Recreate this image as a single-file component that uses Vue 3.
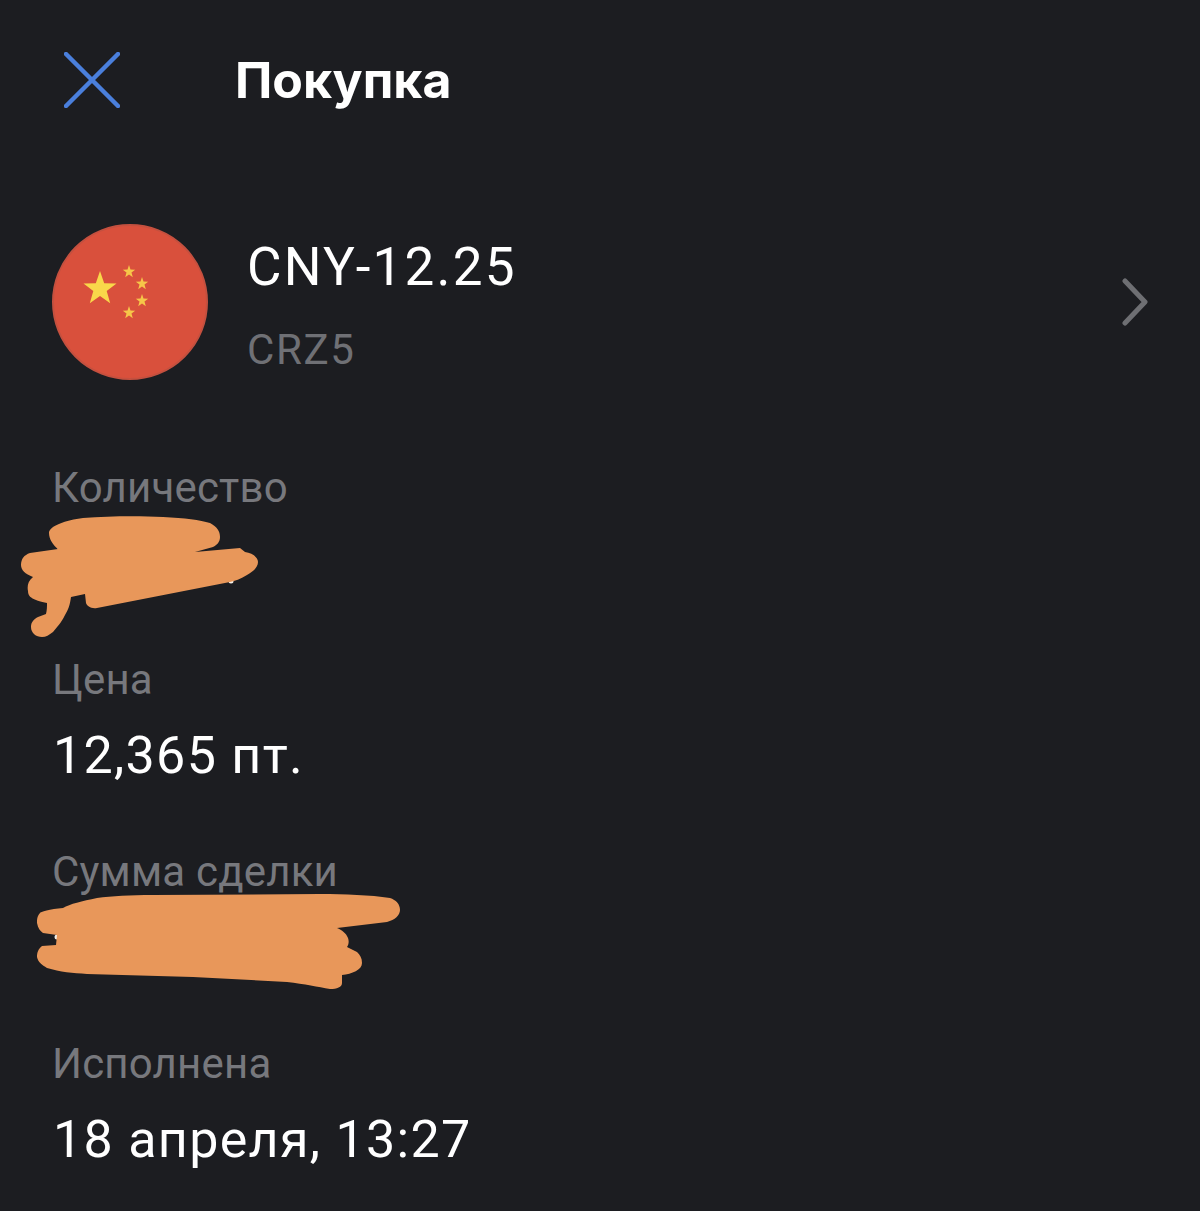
<script setup>
const details = [
  { label: 'Количество', value: '' },
  { label: 'Цена', value: '12,365 пт.' },
  { label: 'Сумма сделки', value: '' },
  { label: 'Исполнена', value: '18 апреля, 13:27' },
]
</script>

<template>
  <div class="page">
    <header class="top">
      <svg class="close" width="56" height="56" viewBox="0 0 56 56">
        <path d="M2 2L54 54M54 2L2 54" fill="none" stroke="#4a7fdc" stroke-width="4.5" stroke-linecap="round" />
      </svg>
      <h1 class="title">Покупка</h1>
    </header>

    <div class="asset">
      <svg class="flag" width="156" height="156" viewBox="0 0 156 156">
        <circle cx="78" cy="78" r="77" fill="#d9503c" stroke="#c4503f" stroke-width="2" />
        <!-- big star and four small ones -->
        <polygon fill="#f9d84a" points="48,47 52.2,59.2 64.5,59.4 54.7,66.9 58.2,79.2 48,71.9 37.8,79.2 41.3,66.9 31.5,59.4 43.8,59.2" />
        <polygon fill="#f6c649" points="77,41 78.5,45.6 83.2,45.7 79.5,48.6 80.8,53.2 77,50.5 73.2,53.2 74.5,48.6 70.8,45.7 75.5,45.6" />
        <polygon fill="#f6c649" points="90,53 91.5,57.6 96.2,57.7 92.5,60.6 93.8,65.2 90,62.5 86.2,65.2 87.5,60.6 83.8,57.7 88.5,57.6" />
        <polygon fill="#f6c649" points="90,70 91.5,74.6 96.2,74.7 92.5,77.6 93.8,82.2 90,79.5 86.2,82.2 87.5,77.6 83.8,74.7 88.5,74.6" />
        <polygon fill="#f6c649" points="77,82 78.5,86.6 83.2,86.7 79.5,89.6 80.8,94.2 77,91.5 73.2,94.2 74.5,89.6 70.8,86.7 75.5,86.6" />
      </svg>
      <div class="asset-text">
        <div class="asset-name">CNY-12.25</div>
        <div class="asset-code">CRZ5</div>
      </div>
      <svg class="chevron" width="28" height="48" viewBox="0 0 28 48">
        <path d="M5 3L25 24L5 45" fill="none" stroke="#6e6f73" stroke-width="5" stroke-linecap="round" stroke-linejoin="round" />
      </svg>
    </div>

    <div class="details">
      <div v-for="item in details" :key="item.label" class="detail">
        <div class="label">{{ item.label }}</div>
        <div class="value">{{ item.value }}</div>
      </div>
    </div>

    <!-- the scribbles that hide the amounts lie over everything -->
    <svg class="scribble" width="1200" height="1211" viewBox="0 0 1200 1211">
      <g fill="#f4efe8">
        <circle cx="60" cy="548" r="2.5" />
        <circle cx="231" cy="581" r="2.5" />
        <circle cx="57" cy="937" r="2.5" />
      </g>
      <path fill="#e8975a" d="M49 533C49 526 66 520 83 518C110 516 140 516 163 517C185 518 200 520 210 523C217 527 220 531 220 537C220 542 217 545 213 547L195 552L240 548L245 552C252 553 258 557 258 562C258 568 252 572 247 575C240 579 235 581 230 582L97 608C91 609 87 606 86 603L85 594L71 597C70 605 68 610 65 615C62 622 56 628 53 632C49 635 46 637 42 637C36 637 31 633 31 627C31 622 34 619 38 617L46 614C47 610 47 606 47 603C42 602 38 601 36 600C31 598 28 596 28 591C27 586 28 581 33 577C25 574 21 570 21 565C21 559 24 555 30 553L58 549C53 545 49 539 49 533Z" />
      <path fill="#e8975a" d="M63 908C50 909 40 912 40 913C37 916 37 920 37 923C38 928 40 931 43 933L57 935L56 945L42 946C38 949 37 953 37 957C38 962 42 965 47 968C60 972 73 973 87 974L193 977L287 982C305 984 318 987 330 989C337 989 342 987 342 983L342 975C352 974 362 970 362 963C362 958 360 955 357 952L347 947C349 944 349 941 348 938C346 933 342 930 337 928L387 922C395 920 400 915 400 910C400 904 396 900 390 898C370 895 345 894 320 894L153 895C130 895 112 896 97 898C82 901 70 904 63 908Z" />
    </svg>
  </div>
</template>

<style>
html,
body {
  margin: 0;
  background: #1c1d21;
}
</style>

<style scoped>
.page {
  position: relative;
  width: 1200px;
  height: 1211px;
  overflow: hidden;
  box-sizing: border-box;
  padding: 52px 52px 0;
  background: #1c1d21;
  font-family: Roboto, "Liberation Sans", sans-serif;
}

.top {
  display: flex;
  align-items: center;
  height: 56px;
  padding-left: 12px;
}

.close {
  flex: none;
}

.title {
  margin: 0 0 0 115px;
  color: #fff;
  font-family: Inter, Roboto, sans-serif;
  font-size: 50px;
  font-weight: 700;
  line-height: 60px;
}

.asset {
  display: flex;
  align-items: center;
  margin-top: 116px;
}

.flag {
  flex: none;
}

.asset-text {
  flex: 1;
  margin-left: 39px;
  padding-top: 6px;
}

.asset-name {
  color: #fff;
  font-size: 53px;
  line-height: 60px;
  letter-spacing: 2.2px;
}

.asset-code {
  margin-top: 29px;
  color: #6f7075;
  font-size: 42px;
  line-height: 48px;
  letter-spacing: 1.6px;
}

.chevron {
  flex: none;
}

.details {
  display: flex;
  flex-direction: column;
  gap: 32px;
  margin-top: 84px;
}

.detail {
  height: 160px;
}

.label {
  color: #77787d;
  font-size: 42px;
  line-height: 48px;
  letter-spacing: 0.2px;
}

.value {
  margin-top: 22px;
  padding-left: 1px;
  color: #fff;
  font-size: 52px;
  line-height: 60px;
  letter-spacing: 1.3px;
}

.scribble {
  position: absolute;
  top: 0;
  left: 0;
}
</style>
